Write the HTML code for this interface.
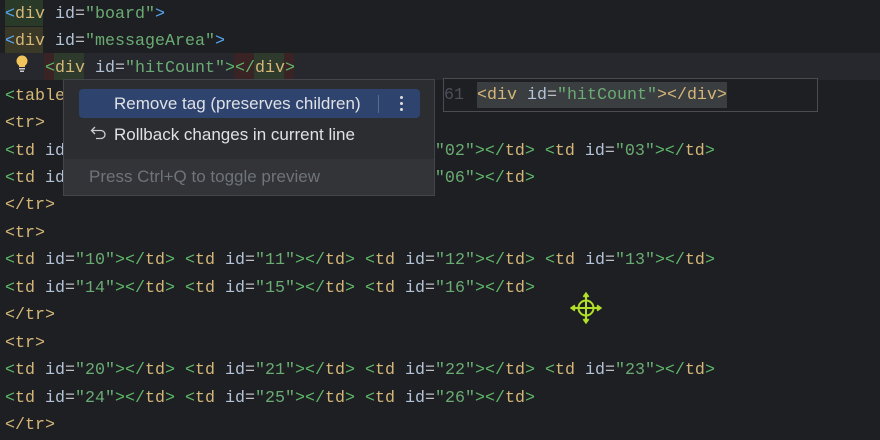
<!DOCTYPE html><html><head><style>
body{margin:0;width:880px;height:440px;background:#1e1f22;overflow:hidden;position:relative;font-family:"Liberation Mono",monospace;font-size:16.67px}
.l{position:absolute;left:5px;height:27px;line-height:27px;white-space:pre;color:#bcbec4}
.g{color:#5fb86a}.y{color:#d5b778}.a{color:#b3c3d8}.v{color:#6aab73}.b{color:#56a8f5}.w{color:#bcbec4}
.ui{font-family:"Liberation Sans",sans-serif;font-size:17px;position:absolute;white-space:pre}
</style></head><body>
<div style="position:absolute;left:0;top:53px;width:880px;height:27px;background:#26282e"></div>
<div style="position:absolute;left:5px;top:0;width:38px;height:26px;background:#2a3a28"></div>
<div style="position:absolute;left:5px;top:27px;width:38px;height:26px;background:#3a3826"></div>
<div style="position:absolute;left:44px;top:53px;width:10px;height:27px;background:#3a2325"></div>
<div style="position:absolute;left:54px;top:53px;width:30px;height:27px;background:#2e3a2c"></div>
<div style="position:absolute;left:234px;top:53px;width:20px;height:27px;background:#3a2325"></div>
<div style="position:absolute;left:254px;top:53px;width:30px;height:27px;background:#2e3a2c"></div>
<div style="position:absolute;left:284px;top:53px;width:10px;height:27px;background:#3a2325"></div>
<div class="l" style="top:1px"><span class="b">&lt;</span><span class="y">div</span> <span class="a">id</span>=<span class="v">"board"</span><span class="b">&gt;</span></div>
<div class="l" style="top:28px"><span class="b">&lt;</span><span class="y">div</span> <span class="a">id</span>=<span class="v">"messageArea"</span><span class="b">&gt;</span></div>
<div class="l" style="top:55px;left:45px"><span class="g">&lt;</span><span class="y">div</span> <span class="a">id</span>=<span class="v">"hitCount"</span><span class="g">&gt;&lt;/</span><span class="y">div</span><span class="g">&gt;</span></div>
<svg style="position:absolute;left:14px;top:54px" width="16" height="20" viewBox="0 0 16 20"><circle cx="8" cy="7" r="5.5" fill="#f2c55c"/><rect x="5" y="10" width="6" height="3" fill="#f2c55c"/><rect x="5" y="14" width="6" height="1.5" fill="#ccc"/><rect x="6" y="16.5" width="4" height="1.5" fill="#ccc"/></svg>
<div class="l" style="top:83px"><span class="g">&lt;</span><span class="y">table</span></div>
<div class="l" style="top:110px"><span class="y">&lt;tr&gt;</span></div>
<div class="l" style="top:138px"><span class="g">&lt;</span><span class="y">td</span> <span class="a">id</span>                                     <span class="v">"02"</span><span class="g">&gt;&lt;/</span><span class="y">td</span><span class="g">&gt;</span> <span class="g">&lt;</span><span class="y">td</span> <span class="a">id</span>=<span class="v">"03"</span><span class="g">&gt;&lt;/</span><span class="y">td</span><span class="g">&gt;</span></div>
<div class="l" style="top:165px"><span class="g">&lt;</span><span class="y">td</span> <span class="a">id</span>                                     <span class="v">"06"</span><span class="g">&gt;&lt;/</span><span class="y">td</span><span class="g">&gt;</span></div>
<div class="l" style="top:192px"><span class="y">&lt;/tr&gt;</span></div>
<div class="l" style="top:220px"><span class="y">&lt;tr&gt;</span></div>
<div class="l" style="top:247px"><span class="g">&lt;</span><span class="y">td</span> <span class="a">id</span>=<span class="v">"10"</span><span class="g">&gt;&lt;/</span><span class="y">td</span><span class="g">&gt;</span> <span class="g">&lt;</span><span class="y">td</span> <span class="a">id</span>=<span class="v">"11"</span><span class="g">&gt;&lt;/</span><span class="y">td</span><span class="g">&gt;</span> <span class="g">&lt;</span><span class="y">td</span> <span class="a">id</span>=<span class="v">"12"</span><span class="g">&gt;&lt;/</span><span class="y">td</span><span class="g">&gt;</span> <span class="g">&lt;</span><span class="y">td</span> <span class="a">id</span>=<span class="v">"13"</span><span class="g">&gt;&lt;/</span><span class="y">td</span><span class="g">&gt;</span></div>
<div class="l" style="top:275px"><span class="g">&lt;</span><span class="y">td</span> <span class="a">id</span>=<span class="v">"14"</span><span class="g">&gt;&lt;/</span><span class="y">td</span><span class="g">&gt;</span> <span class="g">&lt;</span><span class="y">td</span> <span class="a">id</span>=<span class="v">"15"</span><span class="g">&gt;&lt;/</span><span class="y">td</span><span class="g">&gt;</span> <span class="g">&lt;</span><span class="y">td</span> <span class="a">id</span>=<span class="v">"16"</span><span class="g">&gt;&lt;/</span><span class="y">td</span><span class="g">&gt;</span></div>
<div class="l" style="top:302px"><span class="y">&lt;/tr&gt;</span></div>
<div class="l" style="top:330px"><span class="y">&lt;tr&gt;</span></div>
<div class="l" style="top:357px"><span class="g">&lt;</span><span class="y">td</span> <span class="a">id</span>=<span class="v">"20"</span><span class="g">&gt;&lt;/</span><span class="y">td</span><span class="g">&gt;</span> <span class="g">&lt;</span><span class="y">td</span> <span class="a">id</span>=<span class="v">"21"</span><span class="g">&gt;&lt;/</span><span class="y">td</span><span class="g">&gt;</span> <span class="g">&lt;</span><span class="y">td</span> <span class="a">id</span>=<span class="v">"22"</span><span class="g">&gt;&lt;/</span><span class="y">td</span><span class="g">&gt;</span> <span class="g">&lt;</span><span class="y">td</span> <span class="a">id</span>=<span class="v">"23"</span><span class="g">&gt;&lt;/</span><span class="y">td</span><span class="g">&gt;</span></div>
<div class="l" style="top:385px"><span class="g">&lt;</span><span class="y">td</span> <span class="a">id</span>=<span class="v">"24"</span><span class="g">&gt;&lt;/</span><span class="y">td</span><span class="g">&gt;</span> <span class="g">&lt;</span><span class="y">td</span> <span class="a">id</span>=<span class="v">"25"</span><span class="g">&gt;&lt;/</span><span class="y">td</span><span class="g">&gt;</span> <span class="g">&lt;</span><span class="y">td</span> <span class="a">id</span>=<span class="v">"26"</span><span class="g">&gt;&lt;/</span><span class="y">td</span><span class="g">&gt;</span></div>
<div class="l" style="top:412px"><span class="y">&lt;/tr&gt;</span></div>
<!-- popup -->
<div style="position:absolute;left:63px;top:79px;width:372px;height:117px;background:#2b2d30;border:1px solid #43454a;box-sizing:border-box"></div>
<div style="position:absolute;left:64px;top:159px;width:370px;height:36px;background:#323438"></div>
<div style="position:absolute;left:79px;top:89px;width:341px;height:29px;background:#2e436e;border-radius:4px"></div>
<div style="position:absolute;left:378px;top:95px;width:1px;height:18px;background:#5a6a8a"></div>
<div style="position:absolute;left:400px;top:96px;width:3px;height:3px;background:#ddd;border-radius:2px"></div>
<div style="position:absolute;left:400px;top:102px;width:3px;height:3px;background:#ddd;border-radius:2px"></div>
<div style="position:absolute;left:400px;top:108px;width:3px;height:3px;background:#ddd;border-radius:2px"></div>
<div class="ui" style="left:114px;top:94px;color:#dfe1e5">Remove tag (preserves children)</div>
<svg style="position:absolute;left:90px;top:125px" width="18" height="16" viewBox="0 0 18 16"><path d="M5 2 L1.5 5.5 L5 9 M1.5 5.5 H11 a4 4 0 0 1 0 8 H6" fill="none" stroke="#ccc" stroke-width="1.3"/></svg>
<div class="ui" style="left:114px;top:125px;color:#dfe1e5">Rollback changes in current line</div>
<div class="ui" style="left:89px;top:167px;color:#6f737a">Press Ctrl+Q to toggle preview</div>
<!-- preview -->
<div style="position:absolute;left:443px;top:78px;width:375px;height:34px;background:#1e1f22;border:1px solid #4a4c50;box-sizing:border-box"></div>
<div style="position:absolute;left:477px;top:82px;width:250px;height:26px;background:#3b3e40"></div>
<div class="l" style="left:444px;top:83px;height:26px;line-height:26px;color:#4b5059">61</div>
<div class="l" style="left:477px;top:83px;height:26px;line-height:26px"><span class="y">&lt;div</span> <span class="a">id</span>=<span class="v">"hitCount"</span><span class="y">&gt;&lt;/div&gt;</span></div>
<svg style="position:absolute;left:566px;top:288px" width="40" height="40" viewBox="0 0 40 40" fill="none" stroke="#b2e02a" stroke-width="2"><circle cx="20" cy="20" r="7.5"/><path d="M20 6V34M6 20H34"/><path d="M17.5 9L20 5.5L22.5 9M17.5 31L20 34.5L22.5 31M9 17.5L5.5 20L9 22.5M31 17.5L34.5 20L31 22.5"/></svg>
</body></html>
